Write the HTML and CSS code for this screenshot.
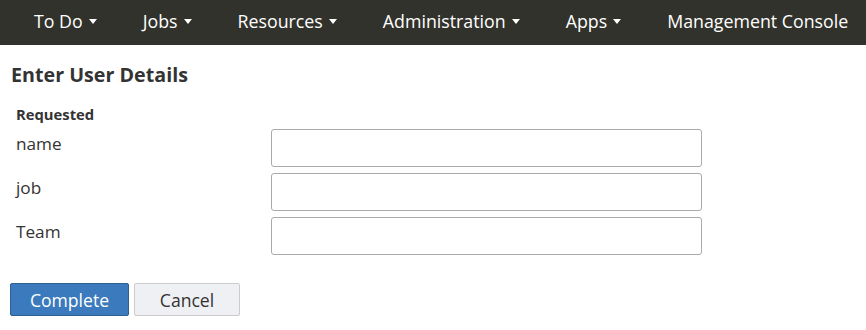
FILE: index.html
```html
<!DOCTYPE html>
<html lang="en">
<head>
  <meta charset="UTF-8">
  <title>Enter User Details</title>
  <link rel="stylesheet" href="styles.css">
</head>
<body>
  <nav class="navbar">
    <a class="nav-item" href="#">To Do <span class="caret"></span></a>
    <a class="nav-item" href="#">Jobs <span class="caret"></span></a>
    <a class="nav-item" href="#">Resources <span class="caret"></span></a>
    <a class="nav-item" href="#">Administration <span class="caret"></span></a>
    <a class="nav-item" href="#">Apps <span class="caret"></span></a>
    <a class="nav-item" href="#">Management Console</a>
  </nav>

  <div class="content">
    <h2 class="page-title">Enter User Details</h2>
    <form class="details-form">
      <div class="section-label">Requested</div>
      <div class="form-row">
        <label for="name">name</label>
        <input id="name" type="text">
      </div>
      <div class="form-row">
        <label for="job">job</label>
        <input id="job" type="text">
      </div>
      <div class="form-row">
        <label for="team">Team</label>
        <input id="team" type="text">
      </div>
      <div class="actions">
        <button type="button" class="btn btn-primary">Complete</button>
        <button type="button" class="btn btn-default">Cancel</button>
      </div>
    </form>
  </div>
</body>
</html>
```

FILE: styles.css
```css
/* General */
body {
  margin: 0;
  font-family: 'Open Sans', sans-serif;
  color: #333;
  background: #fff;
}

/* Top navigation */
.navbar {
  display: flex;
  align-items: center;
  height: 45px;
  box-sizing: border-box;
  padding: 0 0 3px 11px;
  background: #32322c;
}

.nav-item {
  display: flex;
  align-items: center;
  padding: 0 23px;
  color: #fff;
  font-size: 17.8px;
  text-decoration: none;
  white-space: nowrap;
}

.caret {
  display: inline-block;
  margin-left: 6px;
  border-top: 5px solid #fff;
  border-left: 4px solid transparent;
  border-right: 4px solid transparent;
}

/* Content */
.content {
  padding: 0 10px;
}

.page-title {
  margin: 17px 0 0 1px;
  font-size: 19.7px;
  font-weight: 700;
  line-height: 26px;
}

.details-form {
  margin-top: 16px;
}

.section-label {
  padding-left: 6px;
  font-size: 14.8px;
  font-weight: 700;
  line-height: 20px;
}

.form-row {
  display: flex;
  align-items: flex-start;
  margin-top: 6px;
}

.details-form .section-label + .form-row {
  margin-top: 5px;
}

.form-row label {
  width: 255px;
  padding: 3px 0 0 6px;
  font-size: 17.2px;
  line-height: 24px;
}

.form-row input {
  width: 431px;
  height: 38px;
  box-sizing: border-box;
  border: 1px solid #aaa;
  border-radius: 3px;
  font-family: inherit;
}

/* Buttons */
.actions {
  display: flex;
  gap: 5px;
  margin-top: 28px;
}

.btn {
  height: 33px;
  padding: 0;
  border-radius: 2px;
  font-family: inherit;
  font-size: 17.6px;
  cursor: pointer;
}

.btn-primary {
  width: 119px;
  background: #3a7abd;
  border: 1px solid #2e6092;
  color: #fff;
}

.btn-default {
  width: 106px;
  background: #eef0f4;
  border: 1px solid #ccc;
  color: #333;
}
```
